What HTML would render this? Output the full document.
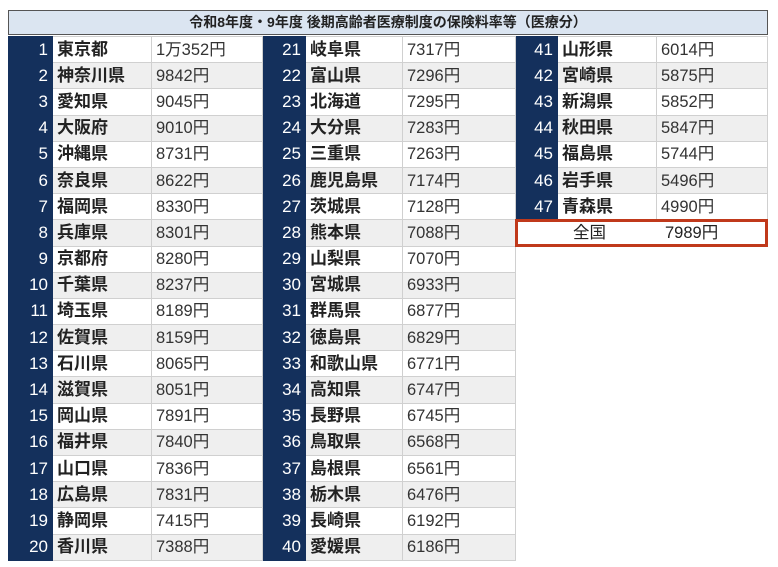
<!DOCTYPE html>
<html><head><meta charset="utf-8"><style>
body{margin:0;background:#fff;font-family:"Liberation Sans","Noto Sans CJK JP",sans-serif;}
.t{position:absolute;left:8px;top:10px;width:760px;height:25px;background:#dbe5f1;border:1px solid #555;box-sizing:border-box;text-align:center;font-weight:bold;font-size:14px;line-height:23px;color:#222;}
table{position:absolute;left:8px;top:36px;border-collapse:collapse;table-layout:fixed;width:759px;}
td{height:25.2px;padding:0;border:1px solid #d0d0d0;font-size:16.5px;line-height:18px;vertical-align:middle;color:#333;white-space:nowrap;overflow:hidden;}
td.n{background:#14305c;color:#fff;text-align:right;padding-right:4px;border-color:#14305c;font-size:17px;}
td.p{font-weight:bold;font-size:17px;color:#222;padding-left:4px;}
td.v{padding-left:4px;}
tr:nth-child(even) td.p,tr:nth-child(even) td.v{background:#efefef;}
td.e{border:none;border-left:1px solid #d0d0d0;}
.z{position:absolute;left:515px;top:219px;width:253px;height:28px;box-sizing:border-box;border:3px solid #c0391b;background:#fff;font-size:16.5px;line-height:22px;color:#222;}
</style></head><body>
<div class="t">令和8年度・9年度 後期高齢者医療制度の保険料率等（医療分）</div>
<table>
<colgroup><col style="width:44px"><col style="width:99px"><col style="width:111px"><col style="width:43px"><col style="width:97px"><col style="width:113px"><col style="width:42px"><col style="width:99px"><col style="width:111px"></colgroup>
<tr><td class="n">1</td><td class="p">東京都</td><td class="v">1万352円</td><td class="n">21</td><td class="p">岐阜県</td><td class="v">7317円</td><td class="n">41</td><td class="p">山形県</td><td class="v">6014円</td></tr>
<tr><td class="n">2</td><td class="p">神奈川県</td><td class="v">9842円</td><td class="n">22</td><td class="p">富山県</td><td class="v">7296円</td><td class="n">42</td><td class="p">宮崎県</td><td class="v">5875円</td></tr>
<tr><td class="n">3</td><td class="p">愛知県</td><td class="v">9045円</td><td class="n">23</td><td class="p">北海道</td><td class="v">7295円</td><td class="n">43</td><td class="p">新潟県</td><td class="v">5852円</td></tr>
<tr><td class="n">4</td><td class="p">大阪府</td><td class="v">9010円</td><td class="n">24</td><td class="p">大分県</td><td class="v">7283円</td><td class="n">44</td><td class="p">秋田県</td><td class="v">5847円</td></tr>
<tr><td class="n">5</td><td class="p">沖縄県</td><td class="v">8731円</td><td class="n">25</td><td class="p">三重県</td><td class="v">7263円</td><td class="n">45</td><td class="p">福島県</td><td class="v">5744円</td></tr>
<tr><td class="n">6</td><td class="p">奈良県</td><td class="v">8622円</td><td class="n">26</td><td class="p">鹿児島県</td><td class="v">7174円</td><td class="n">46</td><td class="p">岩手県</td><td class="v">5496円</td></tr>
<tr><td class="n">7</td><td class="p">福岡県</td><td class="v">8330円</td><td class="n">27</td><td class="p">茨城県</td><td class="v">7128円</td><td class="n">47</td><td class="p">青森県</td><td class="v">4990円</td></tr>
<tr><td class="n">8</td><td class="p">兵庫県</td><td class="v">8301円</td><td class="n">28</td><td class="p">熊本県</td><td class="v">7088円</td><td class="e" colspan="3"></td></tr>
<tr><td class="n">9</td><td class="p">京都府</td><td class="v">8280円</td><td class="n">29</td><td class="p">山梨県</td><td class="v">7070円</td><td class="e" colspan="3"></td></tr>
<tr><td class="n">10</td><td class="p">千葉県</td><td class="v">8237円</td><td class="n">30</td><td class="p">宮城県</td><td class="v">6933円</td><td class="e" colspan="3"></td></tr>
<tr><td class="n">11</td><td class="p">埼玉県</td><td class="v">8189円</td><td class="n">31</td><td class="p">群馬県</td><td class="v">6877円</td><td class="e" colspan="3"></td></tr>
<tr><td class="n">12</td><td class="p">佐賀県</td><td class="v">8159円</td><td class="n">32</td><td class="p">徳島県</td><td class="v">6829円</td><td class="e" colspan="3"></td></tr>
<tr><td class="n">13</td><td class="p">石川県</td><td class="v">8065円</td><td class="n">33</td><td class="p">和歌山県</td><td class="v">6771円</td><td class="e" colspan="3"></td></tr>
<tr><td class="n">14</td><td class="p">滋賀県</td><td class="v">8051円</td><td class="n">34</td><td class="p">高知県</td><td class="v">6747円</td><td class="e" colspan="3"></td></tr>
<tr><td class="n">15</td><td class="p">岡山県</td><td class="v">7891円</td><td class="n">35</td><td class="p">長野県</td><td class="v">6745円</td><td class="e" colspan="3"></td></tr>
<tr><td class="n">16</td><td class="p">福井県</td><td class="v">7840円</td><td class="n">36</td><td class="p">鳥取県</td><td class="v">6568円</td><td class="e" colspan="3"></td></tr>
<tr><td class="n">17</td><td class="p">山口県</td><td class="v">7836円</td><td class="n">37</td><td class="p">島根県</td><td class="v">6561円</td><td class="e" colspan="3"></td></tr>
<tr><td class="n">18</td><td class="p">広島県</td><td class="v">7831円</td><td class="n">38</td><td class="p">栃木県</td><td class="v">6476円</td><td class="e" colspan="3"></td></tr>
<tr><td class="n">19</td><td class="p">静岡県</td><td class="v">7415円</td><td class="n">39</td><td class="p">長崎県</td><td class="v">6192円</td><td class="e" colspan="3"></td></tr>
<tr><td class="n">20</td><td class="p">香川県</td><td class="v">7388円</td><td class="n">40</td><td class="p">愛媛県</td><td class="v">6186円</td><td class="e" colspan="3"></td></tr>
</table>
<div class="z"><span style="display:inline-block;width:88px;text-align:right">全国</span><span style="display:inline-block;margin-left:59px">7989円</span></div>
</body></html>
